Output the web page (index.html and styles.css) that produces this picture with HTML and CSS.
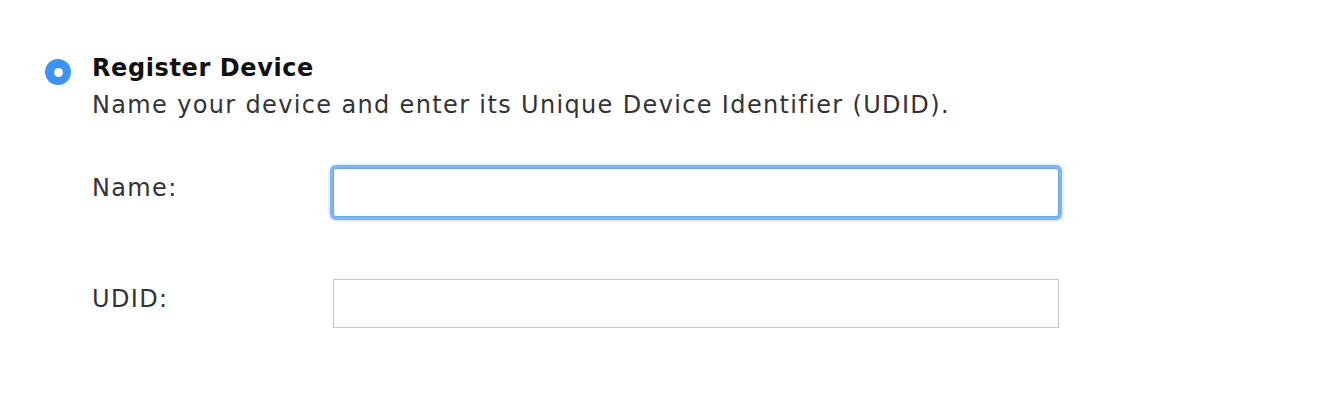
FILE: index.html
```html
<!DOCTYPE html>
<html>
<head>
<meta charset="utf-8">
<link rel="stylesheet" href="styles.css">
</head>
<body>
<div class="option">
  <span class="radio"><span class="dot"></span></span>
  <div class="content">
    <div class="title">Register Device</div>
    <div class="desc">Name your device and enter its Unique Device Identifier (UDID).</div>
    <div class="fields">
      <div class="row">
        <label class="label">Name:</label>
        <input class="field focused" type="text">
      </div>
      <div class="row">
        <label class="label">UDID:</label>
        <input class="field" type="text">
      </div>
    </div>
  </div>
</div>
</body>
</html>
```
FILE: styles.css
```css
html, body {
  margin: 0;
  padding: 0;
  background: #fff;
}
body {
  font-family: "DejaVu Sans", "Liberation Sans", sans-serif;
  color: #333;
}
.option {
  display: flex;
  align-items: flex-start;
  padding: 53px 0 0 45px;
  gap: 21px;
}
.radio {
  width: 26px;
  height: 26px;
  border-radius: 50%;
  background: #3d93f3;
  display: flex;
  align-items: center;
  justify-content: center;
  margin-top: 6px;
  flex: none;
}
.dot {
  width: 9px;
  height: 9px;
  border-radius: 50%;
  background: #fff;
}
.title {
  font-size: 24px;
  font-weight: bold;
  color: #111;
  line-height: 30px;
  letter-spacing: 0.6px;
}
.desc {
  font-size: 24px;
  line-height: 30px;
  letter-spacing: 1.35px;
  color: #333;
  margin-top: 7px;
}
.fields {
  display: flex;
  flex-direction: column;
  gap: 62px;
  margin-top: 48px;
}
.row {
  display: flex;
  align-items: flex-start;
}
.label {
  width: 241px;
  font-size: 24px;
  line-height: 30px;
  letter-spacing: 1.35px;
  color: #333;
  margin-top: 5px;
}
.field {
  width: 726px;
  height: 49px;
  box-sizing: border-box;
  border: 1px solid #c8c8c8;
  background: #fff;
  margin: 0;
  padding: 0 8px;
  font-size: 20px;
  outline: none;
}
.field.focused {
  border-color: #6aa6ee;
  border-radius: 3px;
  box-shadow: 0 0 0 3px #80b5f3, 0 0 3px 4px rgba(130, 185, 250, 0.4);
}
```
